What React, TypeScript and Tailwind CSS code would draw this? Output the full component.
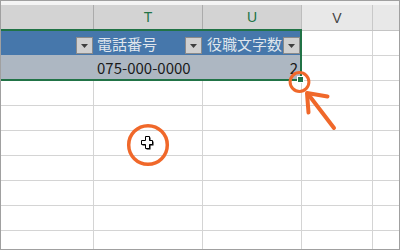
import React from 'react'

const COLS = [
  { key: 'S', w: 'w-[93px]' },
  { key: 'T', w: 'w-[109px]' },
  { key: 'U', w: 'w-[99px]' },
  { key: 'V', w: 'w-[71px]' },
]

function FilterButton({ className = '' }: { className?: string }) {
  return (
    <div className={`flex h-[17px] w-[17px] shrink-0 items-center justify-center border border-[#8a8a8a] bg-[#d0d0d0] ${className}`}>
      <svg width="7" height="4" viewBox="0 0 7 4">
        <path d="M0 0h7L3.5 4z" fill="#3f3f3f" />
      </svg>
    </div>
  )
}

function GridRow() {
  return (
    <div className="flex h-[25px] shrink-0">
      {COLS.map(c => (
        <div key={c.key} className={`${c.w} shrink-0 border-r border-b border-[#d4d4d4]`} />
      ))}
      <div className="flex-1 border-b border-[#d4d4d4]" />
    </div>
  )
}

export default function App() {
  return (
    <div className="relative h-[250px] w-[400px] overflow-hidden bg-white">
      <div className="flex h-full w-full flex-col overflow-hidden border border-[#a0a0a0] font-['Noto_Sans_CJK_JP',sans-serif]">
        <div className="h-[4px] shrink-0 bg-[#f4f4f4]" />

        {/* column letters */}
        <div className="flex shrink-0">
          <div className="w-[301px] shrink-0">
            <div className="flex h-[24px] bg-[#d3d3d3] text-[14px] text-[#217346]">
              <div className="w-[93px] shrink-0 border-r border-[#ababab]" />
              <div className="flex w-[109px] shrink-0 items-center justify-center border-r border-[#ababab] font-['Liberation_Sans',sans-serif]">T</div>
              <div className="flex w-[99px] shrink-0 items-center justify-center border-r border-[#bdbdbd] font-['Liberation_Sans',sans-serif]">U</div>
            </div>
            <div className="h-[2px] bg-[#217346]" />
          </div>
          <div className="flex h-[26px] flex-1 border-b border-[#c4c4c4] bg-[#e8e8e8] font-['Liberation_Sans',sans-serif] text-[14px] text-[#444]">
            <div className="flex w-[71px] shrink-0 items-center justify-center border-r border-[#c8c8c8] pt-[2px]">V</div>
            <div className="flex-1" />
          </div>
        </div>

        {/* table rows */}
        <div className="flex shrink-0">
          <div className="flex h-[50px] w-[301px] shrink-0 flex-col border-r-2 border-b-2 border-[#217346]">
            <div className="flex h-[24px] bg-[#4677ab] text-[15px] text-[#dfe5ec]">
              <div className="flex w-[93px] shrink-0 items-end justify-end pr-[1px] pb-[1px]">
                <FilterButton />
              </div>
              <div className="flex w-[109px] shrink-0 items-center pl-[3px]">
                <span className="leading-none">電話番号</span>
                <FilterButton className="mr-[1px] mb-[1px] ml-auto self-end" />
              </div>
              <div className="flex flex-1 items-center pl-[4px]">
                <span className="leading-none">役職文字数</span>
                <FilterButton className="mb-[1px] ml-auto self-end" />
              </div>
            </div>
            <div className="flex h-[24px] bg-[#adb7c2] text-[15px] text-[#1a1a1a]">
              <div className="w-[93px] shrink-0" />
              <div className="flex w-[109px] shrink-0 items-center pl-[3px]">
                <span className="leading-none">075-000-0000</span>
              </div>
              <div className="flex flex-1 items-center justify-end pr-[2px]">
                <span className="leading-none">2</span>
              </div>
            </div>
          </div>
          <div className="flex flex-1 flex-col">
            <div className="flex h-[25px] border-b border-[#d4d4d4]">
              <div className="w-[71px] shrink-0 border-r border-[#d4d4d4]" />
            </div>
            <div className="flex h-[25px] border-b border-[#d4d4d4]">
              <div className="w-[71px] shrink-0 border-r border-[#d4d4d4]" />
            </div>
          </div>
        </div>

        {Array.from({ length: 7 }).map((_, i) => (
          <GridRow key={i} />
        ))}
      </div>

      {/* annotations */}
      <svg className="pointer-events-none absolute top-0 left-0" width="400" height="250" viewBox="0 0 400 250">
        <rect x="297" y="76" width="7" height="7" fill="#fff" />
        <rect x="298" y="77" width="5" height="5" fill="#217346" />
        <circle cx="299.5" cy="82" r="9.4" fill="none" stroke="#f0682a" strokeWidth="3" />
        <g stroke="#f0682a" strokeWidth="4" strokeLinecap="round" strokeLinejoin="round" fill="none">
          <path d="M334 128L308 94" />
          <path d="M327.5 96.5L307 93L308.5 112.5" />
        </g>
        <circle cx="148" cy="145" r="19.3" fill="none" stroke="#f0682a" strokeWidth="3.5" />
        <polygon
          points="146.5,137.5 150.5,137.5 150.5,141.5 153.5,141.5 153.5,145.5 150.5,145.5 150.5,149.5 146.5,149.5 146.5,145.5 142.5,145.5 142.5,141.5 146.5,141.5"
          fill="#000"
        />
        <polygon
          points="145.5,136.5 149.5,136.5 149.5,140.5 152.5,140.5 152.5,144.5 149.5,144.5 149.5,148.5 145.5,148.5 145.5,144.5 141.5,144.5 141.5,140.5 145.5,140.5"
          fill="#fff"
          stroke="#000"
          strokeWidth="1"
        />
      </svg>
    </div>
  )
}
